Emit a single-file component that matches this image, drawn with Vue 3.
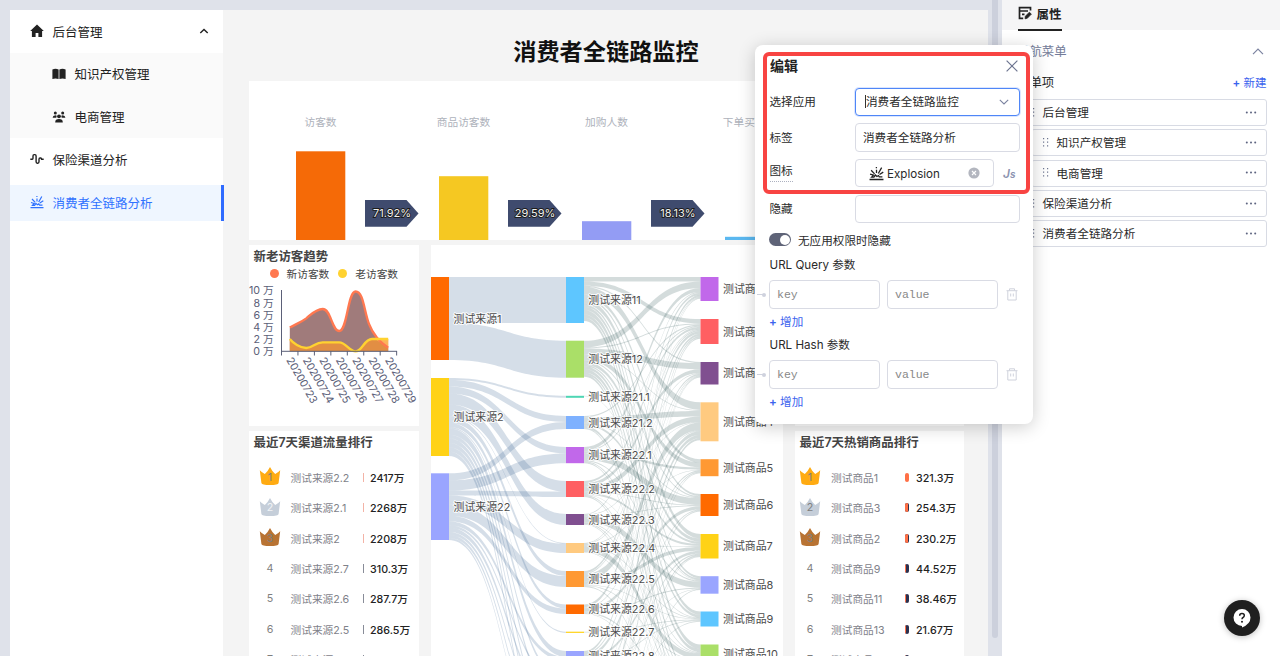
<script setup>
const ORANGE = '#ff6a00'
const BLUE = '#5ec6ff'
const GREEN = '#aadf68'
const VIOLET = '#c168ea'
const RED = '#ff5f62'
const PURPLE = '#804f90'
const PEACH = '#ffca80'
const AMBER = '#ff9933'
const YELLOW = '#ffd216'
const LILAC = '#9aa5ff'

const funnel = [
  { label: '访客数', x: 296, y: 151.3, color: '#f56a07' },
  { label: '商品访客数', x: 439, y: 176.2, color: '#f5c822' },
  { label: '加购人数', x: 582, y: 221.2, color: '#939cf4' },
  { label: '下单买家数', x: 725, y: 236.8, color: '#5bb8f0' }
]
const rates = [
  { x: 365, text: '71.92%' },
  { x: 508, text: '29.59%' },
  { x: 651, text: '18.13%' }
]

const days = [23, 24, 25, 26, 27, 28, 29].map((d, i) => ({ text: '202007' + d, x: 288.5 + i * 16.45 }))
const ticks = Array.from({ length: 8 }, (_, i) => 281.5 + i * 16.45)
const yLabels = [10, 8, 6, 4, 2, 0].map((v, i) => ({ text: v + ' 万', y: 294.3 + i * 12.2 }))
const newLine = 'M289.8 327.6C296 324 301 322.3 306.3 318.3C311 314.5 316 309 322.7 309C331 309 332 331 339.2 331C347.5 331 347.5 291.5 355.6 291.5C363.5 291.5 364 311 369 324C374 337 381 343 388.2 347.8'
const oldLine = 'M289.8 339C293 343 300 348 306.3 348C313 348 315 342.3 322.7 342.3L339.2 342.3C346 342.3 349 351.3 355.6 351.3C362.5 351.3 364 339 372 339L388.2 339'

const src = [
  { y: 277, h: 83, c: ORANGE, t: '测试来源1' },
  { y: 378, h: 78, c: YELLOW, t: '测试来源2' },
  { y: 473.3, h: 66.7, c: LILAC, t: '测试来源22' }
]
const mid = [
  { y: 277, h: 46, c: BLUE, t: '测试来源11' },
  { y: 340.7, h: 37, c: GREEN, t: '测试来源12' },
  { y: 395.8, h: 2, c: '#4ed6b4', t: '测试来源21.1' },
  { y: 416, h: 13, c: '#7eb1ff', t: '测试来源21.2' },
  { y: 447, h: 16.2, c: VIOLET, t: '测试来源22.1' },
  { y: 481, h: 16, c: RED, t: '测试来源22.2' },
  { y: 514, h: 11, c: PURPLE, t: '测试来源22.3' },
  { y: 543, h: 10, c: PEACH, t: '测试来源22.4' },
  { y: 571, h: 16, c: AMBER, t: '测试来源22.5' },
  { y: 604.5, h: 9.5, c: ORANGE, t: '测试来源22.6' },
  { y: 631.7, h: 1.2, c: YELLOW, t: '测试来源22.7' },
  { y: 651, h: 10, c: LILAC, t: '测试来源22.8' },
  { y: 679, h: 6, c: BLUE, t: '' },
  { y: 703, h: 8, c: GREEN, t: '' },
  { y: 729, h: 7, c: RED, t: '' },
  { y: 754, h: 8, c: RED, t: '' },
  { y: 780, h: 6, c: RED, t: '' }
]
const dst = [
  { y: 277, h: 24, c: VIOLET },
  { y: 319, h: 25, c: RED },
  { y: 362, h: 22.5, c: PURPLE },
  { y: 402.3, h: 39, c: PEACH },
  { y: 459.2, h: 17, c: AMBER },
  { y: 494, h: 22, c: ORANGE },
  { y: 534, h: 24.5, c: YELLOW },
  { y: 576.2, h: 17.5, c: LILAC },
  { y: 611.5, h: 15, c: BLUE },
  { y: 644.5, h: 18, c: GREEN },
  { y: 682, h: 20, c: RED },
  { y: 722, h: 20, c: RED }
].map((n, i) => ({ ...n, t: '测试商品' + (i + 1) }))

/* rows: source nodes, columns: middle nodes */
const flowA = [
  [46, 37],
  [0, 0, 1.8, 6, 6.5, 10, 11, 0.8, 5, 4, 1.2, 6, 3.5, 4, 4, 4, 4],
  [0, 0, 0, 7, 10, 5, 0, 9, 11, 5.5, 0, 4, 2.5, 4, 3, 3, 2]
]
/* rows: middle nodes, columns: target nodes */
const flowB = [
  [4, 4, 1, 7, 3, 2, 4, 2, 3, 4, 3, 3],
  [6, 1, 5.5, 0.8, 4.5, 1, 3, 1.5, 2.5, 3, 2, 2],
  [0, 0, 0, 0, 0, 0, 0, 0.5, 0, 0, 0, 0],
  [0, 1.2, 0, 5, 0, 0.8, 2, 0, 0, 0, 2, 1],
  [3.5, 0.8, 0, 0, 2, 6, 0, 1, 0, 0.8, 1, 0],
  [0, 2.2, 3.5, 5, 0, 0.7, 2, 0, 0.6, 0, 1, 1],
  [0.8, 0, 0, 0.6, 0, 0.6, 0, 5.5, 0, 0.7, 1, 0.5],
  [0, 0.6, 0.6, 0, 0.6, 0, 0.8, 0, 0.6, 5, 0.5, 0],
  [2, 1, 0, 7, 0, 0, 3.5, 0, 0.6, 0.6, 0, 1],
  [0, 2.6, 0, 0.8, 0, 3, 0, 0.8, 0, 0, 1, 0.5],
  [0, 0, 0, 0, 0, 0, 0, 0, 0.7, 0, 0, 0],
  [2.2, 0, 1.4, 3.2, 0, 0, 2.5, 0, 0.6, 0, 0, 0],
  [0, 2, 0, 0, 1, 0, 0, 0.6, 0, 0, 0, 0],
  [0.6, 0, 0.8, 3, 0, 1, 1, 0, 0, 0.6, 0, 0],
  [0, 1.5, 0, 0, 1, 0, 0, 0, 0.8, 0, 0, 0],
  [0.6, 0, 0.7, 2, 0, 0.7, 1.5, 0, 0, 0, 0, 0],
  [0, 1, 0.5, 0, 0.6, 0, 0.6, 0.6, 0, 0.6, 0, 0]
]

function bands(from, to, flow, x0, x1) {
  const outY = from.map(n => n.y)
  const inY = to.map(n => n.y)
  const outSum = flow.map(r => r.reduce((a, b) => a + b, 0))
  const inSum = to.map((_, j) => flow.reduce((a, r) => a + (r[j] || 0), 0))
  const m = (x0 + x1) / 2
  const list = []
  flow.forEach((row, i) => row.forEach((v, j) => {
    if (!v) return
    const ho = v * Math.min(1.1, from[i].h / outSum[i])
    const hi = v * Math.min(1.1, to[j].h / inSum[j])
    const a = outY[i]
    const b = inY[j]
    outY[i] += ho
    inY[j] += hi
    list.push(`M${x0} ${a}C${m} ${a} ${m} ${b} ${x1} ${b}L${x1} ${b + hi}C${m} ${b + hi} ${m} ${a + ho} ${x0} ${a + ho}Z`)
  }))
  return list
}
const linksA = bands(src, mid, flowA, 449, 566)
const linksB = bands(mid, dst, flowB, 584, 700.5)
const shownDst = dst.slice(0, 10)
const shownMid = mid.slice(0, 12)

const channels = [
  ['测试来源2.2', '2417万'], ['测试来源2.1', '2268万'], ['测试来源2', '2208万'],
  ['测试来源2.7', '310.3万'], ['测试来源2.6', '287.7万'], ['测试来源2.5', '286.5万'], ['测试来源2.3', '280.1万']
]
const goods = [
  ['测试商品1', '321.3万', 100], ['测试商品3', '254.3万', 78], ['测试商品2', '230.2万', 72],
  ['测试商品9', '44.52万', 14], ['测试商品11', '38.46万', 12], ['测试商品13', '21.67万', 7], ['测试商品12', '20.11万', 6]
]
const crowns = ['#ffab12', '#c5ced9', '#b87333']

const menuItems = [
  { t: '后台管理', sub: false }, { t: '知识产权管理', sub: true }, { t: '电商管理', sub: true },
  { t: '保险渠道分析', sub: false }, { t: '消费者全链路分析', sub: false }
]
const paramGroups = ['URL Query 参数', 'URL Hash 参数']
</script>

<template>
  <div class="page">
    <div class="stage">
      <nav class="side">
        <div class="item top">
          <svg width="14" height="14" viewBox="0 0 14 14"><path d="M7 .6L.2 6.900h1.700V13h3.700V9h2.800v4h3.700V6.900h1.700z" fill="#222" /></svg>
          <span>后台管理</span>
          <svg class="caret" width="10" height="6" viewBox="0 0 10 6"><path d="M1.300 5L5 1.400 8.700 5" fill="none" stroke="#222" stroke-width="1.400" /></svg>
        </div>
        <div class="subs">
          <div class="item sub">
            <svg width="14" height="14" viewBox="0 0 14 14"><path d="M.4 2.400Q3.500 1.300 6.600 2.400V12Q3.500 11 .4 12zM7.400 2.400Q10.500 1.300 13.600 2.400V12Q10.500 11 7.400 12z" fill="#222" /></svg>
            <span>知识产权管理</span>
          </div>
          <div class="item sub">
            <svg width="14" height="14" viewBox="0 0 14 14" fill="#222"><circle cx="3.300" cy="3.100" r="1.500" /><circle cx="10.700" cy="3.100" r="1.500" /><circle cx="7" cy="6.300" r="1.900" /><path d="M.6 7.800Q.8 5.300 3.300 5.300L4.700 5.700 4.300 7.800zM13.400 7.800Q13.200 5.300 10.700 5.300L9.300 5.700 9.700 7.800zM3.200 12.400Q3.200 9.100 7 9.100T10.800 12.400z" /></svg>
            <span>电商管理</span>
          </div>
        </div>
        <div class="item top">
          <svg width="14" height="14" viewBox="0 0 14 14"><path d="M.3 7.200H2.200Q3 7.200 3 6.200V3.900Q3 2.600 4.200 2.600H4.900Q6.100 2.600 6.100 3.900V9.800Q6.100 11.200 7.300 11.200H7.800Q9 11.200 9 9.800V7.200Q9 6 10 6H10.700Q11.600 6 11.600 7.200H13.700" fill="none" stroke="#222" stroke-width="1.400" /></svg>
          <span>保险渠道分析</span>
        </div>
        <div class="item top active">
          <svg width="14" height="14" viewBox="0 0 14 14" fill="none" stroke="#2f72ff" stroke-width="1.200"><path d="M.5 12.600H13.500M2 4L5.200 7.400M7 3.400V6.600M11.800 1.500L8.700 7M13.300 5.700L9.800 8M1 7.500L4.200 8.500 2.500 10.300H4.600L6 8.400 7.400 9.800 8.800 8.900 9.600 10.200H12.500M6.900 1V2.100" /></svg>
          <span>消费者全链路分析</span>
        </div>
      </nav>

      <main class="board">
        <h1>消费者全链路监控</h1>
        <section class="card funnel">
          <svg width="715" height="159" viewBox="249 81 715 159">
            <g v-for="b in funnel" :key="b.label">
              <text class="flabel" :x="b.x + 24.500" y="126.200">{{ b.label }}</text>
              <rect :x="b.x" :y="b.y" width="49.300" :height="240 - b.y" :fill="b.color" />
            </g>
            <g v-for="r in rates" :key="r.text">
              <path :d="`M${r.x} 200h41.500l12 13.400-12 13.400h-41.500z`" fill="#3f4b6e" />
              <text class="rate" :x="r.x + 27" y="217.400">{{ r.text }}</text>
            </g>
          </svg>
        </section>
        <div class="cols">
          <div class="col">
            <section class="card trend">
              <h2>新老访客趋势</h2>
              <div class="legend"><i class="dot a"></i><span>新访客数</span><i class="dot b"></i><span>老访客数</span></div>
              <svg width="170" height="145" viewBox="249 281 170 145">
                <path :d="newLine + 'V351.300H289.800Z'" fill="#a07b7b" />
                <path :d="oldLine + 'V351.300H289.800Z'" fill="#e28e43" />
                <path d="M376 339.500H388.200V347.500Q382 344 376 339.500Z" fill="#fbb35c" />
                <path :d="newLine" fill="none" stroke="#ff7850" stroke-width="2.300" />
                <path :d="oldLine" fill="none" stroke="#ffd230" stroke-width="2.300" />
                <path d="M281.500 290V351.300H397" fill="none" stroke="#5b6078" />
                <path v-for="t in ticks" :key="t" :d="`M${t} 351V355.500`" stroke="#5b6078" />
                <text v-for="l in yLabels" :key="l.text" class="axis" x="273.800" :y="l.y" text-anchor="end">{{ l.text }}</text>
                <text v-for="d in days" :key="d.text" class="axis day" :transform="`translate(${d.x - 2.400} 360) rotate(60)`" textLength="51">{{ d.text }}</text>
              </svg>
            </section>
            <section class="card rank">
              <h2>最近7天渠道流量排行</h2>
              <div v-for="(r, i) in channels" :key="r[0]" class="row left">
                <span class="no">
                  <svg v-if="i < 3" class="crown" width="22" height="20" viewBox="0 0 22 20"><path d="M.8 4.300Q3 6.700 5.800 8 9 5 11 .9 13 5 16.200 8 19 6.700 21.200 4.300L19.600 17Q19.300 19 11 19T2.400 17Z" :fill="crowns[i]" /></svg>
                  <b :class="{ pale: i === 1 }">{{ i + 1 }}</b>
                </span>
                <span class="name">{{ r[0] }}</span><i class="line" :class="{ hot: i < 3 }"></i><span class="val">{{ r[1] }}</span>
              </div>
            </section>
          </div>
          <section class="card flow">
            <svg width="352" height="411" viewBox="431 245 352 411">
              <path v-for="(d, i) in linksA" :key="'a' + i" :d="d" fill="rgba(46,92,142,.2)" />
              <path v-for="(d, i) in linksB" :key="'b' + i" :d="d" fill="rgba(41,82,82,.2)" />
              <rect v-for="n in src" :key="n.t" x="431" :y="n.y" width="18" :height="n.h" :fill="n.c" />
              <rect v-for="n in shownMid" :key="n.y" x="566" :y="n.y" width="18" :height="n.h" :fill="n.c" />
              <rect v-for="n in shownDst" :key="n.t" x="700.500" :y="n.y" width="18" :height="n.h" :fill="n.c" />
              <text v-for="n in src" :key="'t' + n.t" class="node" x="453.500" :y="n.y + n.h / 2 + 4">{{ n.t }}</text>
              <text v-for="n in shownMid" :key="'t' + n.y" class="node" x="588.300" :y="n.y + n.h / 2 + 4">{{ n.t }}</text>
              <text v-for="n in shownDst" :key="'t' + n.t" class="node" x="723" :y="n.y + n.h / 2 + 4">{{ n.t }}</text>
            </svg>
          </section>
          <div class="col">
            <section class="card trend"></section>
            <section class="card rank">
              <h2>最近7天热销商品排行</h2>
              <div v-for="(r, i) in goods" :key="r[0]" class="row right">
                <span class="no">
                  <svg v-if="i < 3" class="crown" width="22" height="20" viewBox="0 0 22 20"><path d="M.8 4.300Q3 6.700 5.800 8 9 5 11 .9 13 5 16.200 8 19 6.700 21.200 4.300L19.600 17Q19.300 19 11 19T2.400 17Z" :fill="crowns[i]" /></svg>
                  <b>{{ i + 1 }}</b>
                </span>
                <span class="name">{{ r[0] }}</span><i class="pill"><em :style="{ width: r[2] + '%' }"></em></i><span class="val">{{ r[1] }}</span>
              </div>
            </section>
          </div>
        </div>
      </main>
    </div>

    <div class="gutter"><div class="thumb"></div></div>

    <aside class="props">
      <header>
        <div class="tab">
          <svg width="14" height="14" viewBox="0 0 14 14" fill="none" stroke="#222" stroke-width="1.700"><path d="M12.500 4.500V1.700H1.500V12.300H5.200M1.500 5H10M4 8.300H6.500" /><path d="M7 12.800L7.300 10.300 11.300 6.200 13.400 8.100 9.300 12.300Z" fill="#222" stroke-width=".7" /></svg>
          <span>属性</span>
        </div>
      </header>
      <div class="sec">
        <span>导航菜单</span>
        <svg width="12" height="7" viewBox="0 0 12 7"><path d="M1 6.200L6 1.200 11 6.200" fill="none" stroke="#7b83a0" stroke-width="1.200" /></svg>
      </div>
      <div class="sub-head"><span>菜单项</span><a><b>+</b> 新建</a></div>
      <div v-for="m in menuItems" :key="m.t" class="mi" :class="{ child: m.sub }">
        <svg width="6" height="9" viewBox="0 0 6 9" fill="#6f7791"><path d="M0 0h1.200v1.200H0zM4 0h1.200v1.200H4zM0 3.600h1.200v1.200H0zM4 3.600h1.200v1.200H4zM0 7.200h1.200v1.200H0zM4 7.200h1.200v1.200H4z" /></svg>
        <span>{{ m.t }}</span>
        <svg class="more" width="12" height="3" viewBox="0 0 12 3" fill="#5d6480"><circle cx="1.800" cy="1.500" r="1" /><circle cx="6" cy="1.500" r="1" /><circle cx="10.200" cy="1.500" r="1" /></svg>
      </div>
    </aside>

    <div class="dialog">
      <div class="mark"></div>
      <div class="d-head">
        <strong>编辑</strong>
        <svg width="12" height="12" viewBox="0 0 12 12"><path d="M.6.6L11.400 11.400M11.400.6L.6 11.400" stroke="#6d7590" stroke-width="1.200" /></svg>
      </div>
      <div class="f-row">
        <label>选择应用</label>
        <div class="input focus">
          <i class="cursor"></i><span>消费者全链路监控</span>
          <svg class="end" width="10" height="6" viewBox="0 0 10 6"><path d="M.8.8L5 5 9.200.8" fill="none" stroke="#7b83a0" stroke-width="1.100" /></svg>
        </div>
      </div>
      <div class="f-row"><label>标签</label><div class="input"><span>消费者全链路分析</span></div></div>
      <div class="f-row">
        <label><span class="dotted">图标</span></label>
        <div class="input icon-in">
          <svg width="15" height="15" viewBox="0 0 14 14" fill="none" stroke="#222" stroke-width="1.200"><path d="M.5 12.600H13.500M2 4L5.200 7.400M7 3.400V6.600M11.800 1.500L8.700 7M13.300 5.700L9.800 8M1 7.500L4.200 8.500 2.500 10.300H4.600L6 8.400 7.400 9.800 8.800 8.900 9.600 10.200H12.500M6.900 1V2.100" /></svg>
          <span class="latin">Explosion</span>
          <svg class="end clear" width="12" height="12" viewBox="0 0 12 12"><circle cx="6" cy="6" r="5.600" fill="#b3b6bf" /><path d="M4 4L8 8M8 4L4 8" stroke="#fff" stroke-width="1.100" /></svg>
        </div>
        <span class="js">J<small>s</small></span>
      </div>
      <div class="f-row"><label>隐藏</label><div class="input"></div></div>
      <div class="switch-row"><i class="switch"></i><span>无应用权限时隐藏</span></div>
      <div v-for="g in paramGroups" :key="g" class="group">
        <div class="g-title">{{ g }}</div>
        <div class="pair">
          <i class="port"></i>
          <div class="kv">key</div>
          <div class="kv">value</div>
          <svg width="12" height="13" viewBox="0 0 12 13" fill="none" stroke="#cfd2dc"><path d="M.5 2.700H11.500M3.500 2.500V.8H8.500V2.500M1.800 3V12H10.200V3M4.700 5.500V8.500M7.300 5.500V8.500" /></svg>
        </div>
        <a class="add"><b>+</b> 增加</a>
      </div>
    </div>

    <div class="help">
      <svg width="20" height="20" viewBox="0 0 20 20"><path d="M10 1A8.500 8.500 0 1 0 10 18V19.500Q18.500 16 18.500 9.500A8.500 8.500 0 0 0 10 1Z" fill="#fff" /><path d="M7.700 7.700Q7.700 5.600 10 5.600T12.300 7.600Q12.300 8.800 11 9.500Q10 10 10 11.300" fill="none" stroke="#1f1f1f" stroke-width="1.500" /><circle cx="10" cy="13.700" r="1" fill="#1f1f1f" /></svg>
    </div>
  </div>
</template>

<style>
body { margin: 0; overflow: hidden; }
</style>

<style scoped>
* { box-sizing: border-box; }
.page {
  position: relative;
  width: 1280px;
  height: 656px;
  overflow: hidden;
  display: grid;
  grid-template-columns: 988px 14px 278px;
  font-family: Inter, "Noto Sans CJK SC", sans-serif;
  color: #2a2a2a;
  background: #fff;
}
i, em { font-style: normal; display: block; flex: none; }
svg { display: block; flex: none; }
.stage { background: #dfe2ea; padding: 10px 0 0 10px; display: flex; height: 656px; overflow: hidden; }
.side { width: 213px; background: #fff; flex: none; }
.item { height: 43px; display: flex; align-items: center; gap: 8.500px; padding: 0 0 1px 20px; font-size: 12.500px; color: #222; white-space: nowrap; }
.item svg { width: 14px; }
.item.sub { padding-left: 42px; padding-bottom: 2px; }
.item .caret { margin-left: auto; margin-right: 14.500px; width: 10px; }
.subs { background: #fafafa; height: 85px; }
.subs .item { height: 43px; }
.active { height: 35.500px; margin-top: 4px; background: #eff6ff; color: #2f72ff; border-right: 3px solid #2f6bff; width: 214px; position: relative; z-index: 1; }
.board { width: 765px; background: #f4f4f4; padding: 0 25px 0 26px; }
h1 { margin: 0; height: 71px; line-height: 85px; text-align: center; font-size: 23.200px; font-weight: 600; color: #111; white-space: nowrap; }
h2 { margin: 0; font-size: 12.450px; font-weight: 600; line-height: 24px; padding-left: 4.500px; color: #444; white-space: nowrap; }
.trend h2 { height: 22px; }
.card { background: #fff; overflow: hidden; }
.funnel { height: 159px; width: 715px; }
.flabel { font-size: 10.700px; fill: #aeb2bb; text-anchor: middle; }
.rate { font-size: 11px; fill: #f0f0f0; stroke: #1c1c1c; stroke-width: 1.800px; paint-order: stroke; text-anchor: middle; }
.cols { display: grid; grid-template-columns: 170px 352px 169px; column-gap: 12px; margin-top: 5px; width: 715px; }
.col { display: flex; flex-direction: column; gap: 5px; height: 411px; }
.trend { height: 181px; flex: none; }
.legend { display: flex; align-items: center; height: 14px; padding: 0 0 2px 20.500px; font-size: 10.700px; color: #444; }
.dot { width: 9px; height: 9px; border-radius: 50%; margin-right: 8px; }
.dot.a { background: #ff7850; }
.dot.b { background: #ffd230; margin-left: 9px; }
.axis { font-size: 10.700px; fill: #5b6078; }
.rank { flex: 1; }
.rank h2 { height: 31px; }
.flow { height: 411px; }
.node { font-size: 10.900px; fill: #4c4c4c; stroke: rgba(255, 255, 255, .85); stroke-width: 2px; paint-order: stroke; }
.row { display: flex; align-items: center; height: 30.450px; font-size: 10.700px; color: #7f828a; white-space: nowrap; }
.row.left { padding-left: 10px; }
.row.right { padding-left: 4px; }
.no { width: 22px; height: 20px; display: grid; place-items: center; flex: none; }
.no > * { grid-area: 1 / 1; }
.crown { margin-top: -2px; }
.no b { font-weight: 400; position: relative; color: #7f7f7f; }
.no b.pale { color: #f1f3f6; }
.name { flex: none; }
.left .name { width: 72px; margin-left: 9.500px; }
.right .name { width: 73.500px; margin-left: 10px; }
.line { width: 1px; height: 9px; background: #888c98; margin-right: 6.500px; }
.line.hot { background: #f3b3a6; }
.pill { width: 4.500px; height: 9px; border-radius: 2px; overflow: hidden; background: #2a3150; margin-right: 7px; }
.pill em { height: 9px; background: #ff7046; }
.val { color: #222; font-weight: 500; }
.gutter { background: #dfe2ea; height: 656px; }
.thumb { width: 6px; height: 638px; margin-left: 4px; background: #ccd0dc; border-radius: 0 0 3px 3px; }
.props { background: #fff; height: 656px; padding-right: 13.500px; }
.props header { background: #f5f5f6; height: 30px; margin-right: -13.500px; padding-left: 15.500px; }
.tab { display: flex; align-items: center; gap: 5px; width: 44px; height: 31px; padding-bottom: 3px; border-bottom: 2px solid #222; font-size: 12.500px; font-weight: 600; color: #222; white-space: nowrap; }
.sec { display: flex; align-items: center; justify-content: space-between; height: 42px; padding: 0 3px 0 15px; font-size: 12.400px; color: #747c99; }
.sub-head { display: flex; align-items: center; justify-content: space-between; height: 19px; padding-left: 15px; font-size: 12.400px; margin-bottom: 8px; }
.sub-head a { color: #3b63ee; font-size: 11.500px; }
.sub-head b, .add b { font-weight: 600; }
.mi { height: 27px; margin: 0 0 3.350px 15px; border: 1px solid #d8dbe4; border-radius: 3px; display: flex; align-items: center; font-size: 11.600px; padding: 0 9px 1px 10.500px; gap: 8px; white-space: nowrap; }
.mi.child { margin-left: 29px; }
.more { margin-left: auto; }
.dialog { position: absolute; left: 755px; top: 45px; width: 278px; height: 379px; background: #fff; border-radius: 8px; box-shadow: 0 3px 18px rgba(0, 0, 0, .2); padding: 5px 14px 0; font-size: 11.600px; }
.mark { position: absolute; left: 8px; top: 7px; width: 267px; height: 142px; border: 4px solid #f84442; border-radius: 6px; }
.d-head { height: 34px; display: flex; align-items: center; justify-content: space-between; padding: 0 1px 2px 1px; }
.d-head strong { font-size: 14px; font-weight: 600; color: #222; line-height: 16px; margin-top: -1px; }
.f-row { display: flex; align-items: center; height: 35.700px; position: relative; }
label { width: 86px; flex: none; padding: 0 0 1px .5px; white-space: nowrap; }
.input { width: 165px; height: 28.500px; border: 1px solid #d9dbe4; border-radius: 4px; display: flex; align-items: center; padding: 0 7px; white-space: nowrap; flex: none; background: #fff; }
.input > span { margin-top: -1px; }
.input .latin { margin-top: 1px; }
.focus { border: 1.500px solid #4f86f7; box-shadow: 0 0 0 1px #dbe6ff; padding-left: 9px; }
.cursor { width: 1px; height: 13px; background: #333; }
.end { margin-left: auto; margin-right: 3px; }
.icon-in { width: 139px; padding-left: 13px; gap: 3px; }
.clear { margin-right: 6px; }
.dotted { display: inline-block; border-bottom: 1.500px dotted #adb1c0; line-height: 16px; padding-bottom: 2px; }
.js { margin-left: 9px; font-weight: 600; font-style: italic; font-size: 12px; color: #8c93b0; }
.js small { font-size: 10px; }
.switch-row { display: flex; align-items: center; height: 26px; gap: 7px; }
.switch { width: 22px; height: 13px; border-radius: 7px; background: #5f6478; padding: 1.500px 1.500px 0 10.500px; }
.switch::after { content: ""; display: block; width: 10px; height: 10px; border-radius: 50%; background: #fff; }
.group { height: 80px; }
.g-title { height: 23px; line-height: 25px; white-space: nowrap; padding-left: .5px; }
.pair { display: flex; align-items: center; gap: 7px; margin-top: 4.500px; position: relative; }
.pair svg { margin-left: 1px; }
.kv { width: 111px; height: 28.500px; border: 1px solid #d9dbe4; border-radius: 4px; padding-left: 7px; line-height: 27px; font-family: "Liberation Mono", monospace; font-size: 11.500px; color: #888; flex: none; }
.add { display: block; height: 24px; line-height: 26px; color: #3b63ee; white-space: nowrap; }
.port { position: absolute; left: -12px; top: 14px; width: 8px; height: 1px; background: #cfd2de; }
.port::after { content: ""; position: absolute; right: -1px; top: -1.500px; width: 4px; height: 4px; border-radius: 50%; background: #cfd2de; }
.help { position: absolute; left: 1223.500px; top: 599.500px; width: 36px; height: 36px; border-radius: 50%; background: #1f1f1f; display: grid; place-items: center; box-shadow: 0 1px 6px rgba(0, 0, 0, .25); }
</style>
